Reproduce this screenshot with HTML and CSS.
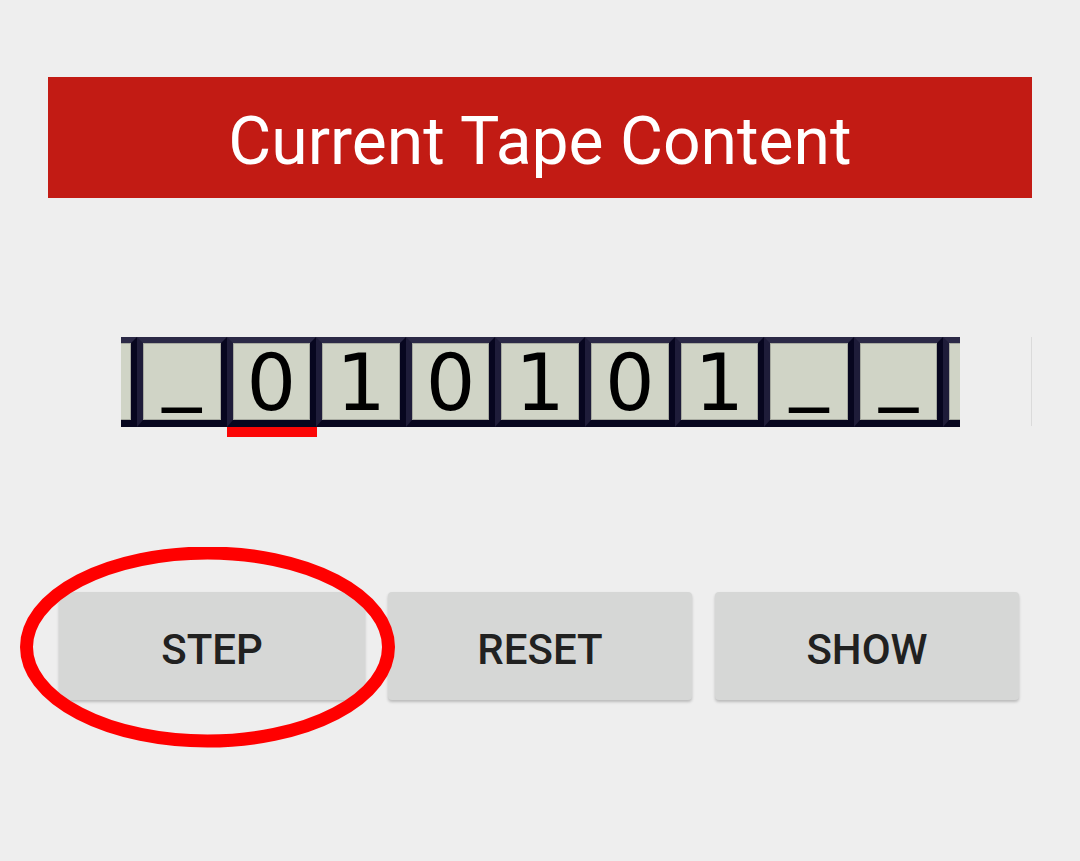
FILE: index.html
```html
<!DOCTYPE html>
<html lang="en">
<head>
<meta charset="utf-8">
<title>Turing Machine Tape</title>
<link rel="stylesheet" href="styles.css">
</head>
<body>
<main class="page">
  <header class="title-bar">
    <h1 class="title">Current Tape Content</h1>
  </header>

  <section class="tape-row">
    <div class="tape-window">
      <div class="tape-strip">
        <div class="slot"><div class="cell blank">_</div><div class="head"></div></div>
        <div class="slot"><div class="cell blank">_</div><div class="head"></div></div>
        <div class="slot"><div class="cell">0</div><div class="head active"></div></div>
        <div class="slot"><div class="cell">1</div><div class="head"></div></div>
        <div class="slot"><div class="cell">0</div><div class="head"></div></div>
        <div class="slot"><div class="cell">1</div><div class="head"></div></div>
        <div class="slot"><div class="cell">0</div><div class="head"></div></div>
        <div class="slot"><div class="cell">1</div><div class="head"></div></div>
        <div class="slot"><div class="cell blank">_</div><div class="head"></div></div>
        <div class="slot"><div class="cell blank">_</div><div class="head"></div></div>
        <div class="slot"><div class="cell blank">_</div><div class="head"></div></div>
      </div>
    </div>
    <div class="tape-edge"></div>
  </section>

  <section class="controls">
    <button class="btn">STEP</button>
    <button class="btn">RESET</button>
    <button class="btn">SHOW</button>
  </section>

  <svg class="highlight" width="375" height="201" viewBox="0 0 375 201" aria-hidden="true">
    <ellipse cx="187.5" cy="100" rx="181" ry="94" fill="none" stroke="#ff0000" stroke-width="13"/>
  </svg>
</main>
</body>
</html>
```
FILE: styles.css
```css
html, body {
  margin: 0;
  padding: 0;
  background: #eeeeee;
}

.page {
  position: relative;
  width: 1080px;
  height: 861px;
  overflow: hidden;
  padding-top: 77px;
  box-sizing: border-box;
  font-family: Roboto, "Liberation Sans", sans-serif;
}

.title-bar {
  margin: 0 48px;
  height: 121px;
  background: #c21b14;
  display: flex;
  align-items: center;
  justify-content: center;
}

.title {
  margin: 0;
  font-family: Roboto, "Liberation Sans", sans-serif;
  font-weight: 400;
  font-size: 66px;
  line-height: 1;
  color: #ffffff;
  padding-top: 9px;
}

.tape-row {
  margin-top: 139px;
  padding-left: 121px;
  display: flex;
  height: 100px;
}

.tape-window {
  width: 839px;
  height: 100px;
  overflow: hidden;
}

.tape-strip {
  display: flex;
  margin-left: -73.6px;
}

.slot {
  width: 89.6px;
  flex: none;
  display: flex;
  flex-direction: column;
}

.cell {
  box-sizing: border-box;
  height: 90px;
  border-style: solid;
  border-width: 6px 6px 7px 6px;
  border-color: #2b2946 #07061f #07061f #1e1c39;
  background: #d0d4c6;
  box-shadow: inset 0 0 0 1px #a7aaa0;
  display: flex;
  justify-content: center;
  align-items: flex-start;
  padding-top: 1px;
  font-family: "DejaVu Sans", sans-serif;
  font-size: 78px;
  line-height: 78px;
  color: #000000;
}

.cell.blank {
  padding-top: 0;
  line-height: 48px;
}

.head {
  height: 10px;
  width: 90px;
}

.head.active {
  background: #fb0606;
}

.tape-edge {
  margin-left: 71px;
  width: 1px;
  height: 89px;
  background: #dadada;
}

.controls {
  margin-top: 155px;
  padding: 0 60px 0 59px;
  display: grid;
  grid-template-columns: 306px 304px 304px;
  column-gap: 23px;
}

.btn {
  height: 108px;
  border: none;
  border-radius: 4px;
  background: #d6d7d6;
  box-shadow: 0 2px 3px rgba(0, 0, 0, 0.22);
  font-family: Roboto, "Liberation Sans", sans-serif;
  font-weight: 500;
  font-size: 42px;
  color: #212121;
  padding: 6px 0 0 0;
  margin: 0;
  cursor: pointer;
}

.highlight {
  position: absolute;
  left: 20px;
  top: 547px;
}
```
